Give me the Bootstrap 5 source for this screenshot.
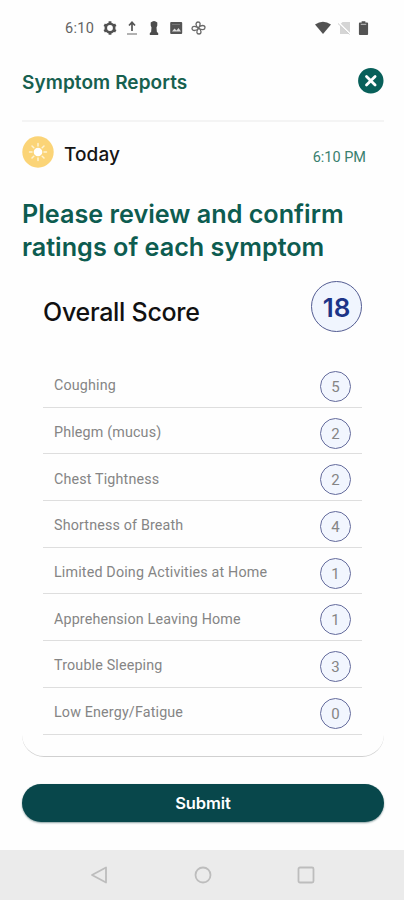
<!DOCTYPE html>
<html lang="en">
<head>
<meta charset="utf-8">
<meta name="viewport" content="width=device-width, initial-scale=1">
<title>Symptom Reports</title>
<link href="https://cdn.jsdelivr.net/npm/bootstrap@5.3.0/dist/css/bootstrap.min.css" rel="stylesheet">
<style>
body { font-family: Inter, "Liberation Sans", sans-serif; background: #fefefe; color: #151515; }
.screen { height: 900px; overflow: hidden; }
.status-bar { height: 55px; padding: 1px 35px 0 65px; font: 400 14.5px/54px Roboto, sans-serif; color: #636363; letter-spacing: .3px; }
.status-bar svg, .sys-nav svg { display: block; flex: none; }
.status-time { width: 38px; padding-top: 1px; }
.status-right { gap: 7px; }
.topbar { height: 67px; margin: 0 20px 0 22px; padding-bottom: 14px; border-bottom: 2px solid #f4f4f4; }
.page-title { font-size: 19px; font-weight: 600; line-height: 24px; color: #17604f; padding-top: 4px; letter-spacing: .08px; }
.close-btn { width: 26px; height: 26px; background: none; }
.day-row { height: 63px; margin: 0 38px 0 22px; padding-bottom: 3px; }
.day-name { font-size: 19px; font-weight: 500; line-height: 24px; margin-left: 10px; padding-top: 6px; letter-spacing: .1px; }
.day-time { font: 400 14.5px/20px Roboto, sans-serif; color: #39806e; padding-top: 11px; }
.prompt { height: 78px; padding: 13px 22px 0; font-size: 25.2px; font-weight: 600; line-height: 32.5px; color: #0d5c50; }
.overall { height: 98px; margin: 0 42px 0 43px; padding-top: 18px; }
.overall-name { font-size: 25px; font-weight: 500; line-height: 32px; color: #111; padding-top: 15px; letter-spacing: -.28px; }
.overall-score { width: 51px; height: 51px; border: 1.3px solid #535c92; background: #f0f5fe; color: #1c3488; font-size: 26px; font-weight: 600; padding-top: 2px; }
.symptoms { margin: 0 42px 0 43px; }
.symptom { height: 46.7px; padding: 0 11px; border-bottom: 1.3px solid #dedede; font: 400 14.3px/20px Roboto, sans-serif; color: #858585; letter-spacing: .16px; }
.symptom-name { padding-top: 3px; }
.rating { width: 31px; height: 31px; border: 1.3px solid #646b9c; background: #f2f6fe; margin-top: 5px; font-size: 15px; letter-spacing: 0; padding-top: 1px; }
.card-edge { height: 22px; margin: 0 20px 0 22px; border-bottom: 1.5px solid #d0d0d0; border-radius: 0 0 22px 22px; }
.submit-btn { height: 38px; margin: 27px 20px 0 22px; background: #08474b; color: #fff; font-size: 16.5px; line-height: 38px; font-weight: 600; letter-spacing: -.1px; box-shadow: 0 1px 2px #8aa0a2; }
.sys-nav { height: 50px; background: #ebebeb; padding: 0 89px 0 90px; }
</style>
</head>
<body>
<main class="screen d-flex flex-column">
  <header class="status-bar d-flex align-items-center flex-shrink-0">
    <span class="status-time">6:10</span>
    <div class="d-flex align-items-center gap-2">
      <svg width="14" height="16" viewBox="0 0 14 16" fill="none" stroke="#515151"><circle cx="7" cy="8" r="4.200" stroke-width="2.600"/><path d="M7 1.300v2M7 12.700v2M1.200 4.700l1.800 1M11 10.300l1.800 1M1.200 11.300l1.800-1M11 5.700l1.800-1" stroke-width="2.800"/></svg>
      <svg width="14" height="16" viewBox="0 0 14 16" fill="none"><path d="M7 11V3M4 5.500L7 2.300l3 3.200" stroke="#555" stroke-width="1.700"/><path d="M2 14h10" stroke="#999" stroke-width="1.500"/></svg>
      <svg width="14" height="16" viewBox="0 0 14 16" fill="#4c4c4c"><path d="M3.700 2.500Q7-.5 10.300 2.500v3L9.500 7.500l.4 4.500 1.300 1v2H2.800v-2l1.300-1 .4-4.500-.8-2z"/></svg>
      <svg width="14" height="16" viewBox="0 0 14 16"><rect x="1.200" y="2" width="12" height="12" rx="1" fill="#555"/><path d="M3 11.500l2.500-3 2 2 2-2.500 2.500 3.500z" fill="#ddd"/><path d="M3 4.500h8" stroke="#777"/></svg>
      <svg width="15" height="16" viewBox="0 0 15 16" fill="none" stroke="#686868" stroke-width="1.300"><path d="M7.500 8C4 6 4.500 2 7 2s3 2.500.5 6c2-3.500 6.500-3 6.500-.5S11 10.500 7.500 8c3.500 2 3 6 .5 6s-3-2.500-.5-6C5.500 11.500 1 11 1 8.500S4 5.500 7.500 8z"/></svg>
    </div>
    <div class="status-right d-flex align-items-center ms-auto">
      <svg width="16" height="14" viewBox="0 0 16 14"><path d="M0 3.500Q8-2 16 3.500L8 13z" fill="#525252"/></svg>
      <svg width="13" height="14" viewBox="0 0 13 14"><path d="M4.500 1H12v12H2V3.500z" fill="#d5d5d5"/><path d="M.5 1.500l12 12" stroke="#fff" stroke-width="1.600"/><path d="M0 2.500l11.500 11" stroke="#ccc"/></svg>
      <svg width="11" height="14" viewBox="0 0 12 15"><path d="M4 0h4v1.500h2q1 0 1 1V14q0 1-1 1H2q-1 0-1-1V2.500q0-1 1-1h2z" fill="#535353"/><path d="M3 3.500h6" stroke="#bbb" stroke-width="1.200"/></svg>
    </div>
  </header>

  <div class="topbar d-flex align-items-center justify-content-between flex-shrink-0">
    <h1 class="page-title m-0">Symptom Reports</h1>
    <button class="close-btn border-0 p-0 d-flex" type="button" aria-label="Close">
      <svg width="26" height="26" viewBox="0 0 26 26"><circle cx="12.800" cy="12.800" r="12.700" fill="#08605a"/><path d="M8.500 8.500l8.600 8.600M17.100 8.500l-8.600 8.600" stroke="#fff" stroke-width="2.800" stroke-linecap="round"/></svg>
    </button>
  </div>

  <div class="day-row d-flex align-items-center flex-shrink-0">
    <svg width="32" height="32" viewBox="0 0 32 32"><circle cx="16" cy="16" r="15.700" fill="#fbd477"/><circle cx="16" cy="16" r="4.300" fill="#fff"/><path d="M16 7.500v2.500M16 22v2.500M7.500 16H10M22 16h2.500M10 10l1.800 1.800M20.200 20.200L22 22M10 22l1.800-1.800M20.200 11.800L22 10" stroke="#fff3d3" stroke-width="1.500" stroke-linecap="round"/></svg>
    <div class="day-name">Today</div>
    <time class="day-time ms-auto">6:10 PM</time>
  </div>

  <h2 class="prompt m-0 flex-shrink-0">Please review and confirm ratings of each symptom</h2>

  <section class="flex-shrink-0">
    <div class="overall d-flex justify-content-between align-items-start">
      <div class="overall-name">Overall Score</div>
      <div class="overall-score rounded-circle d-flex align-items-center justify-content-center">18</div>
    </div>
    <div class="symptoms">
      <div class="symptom d-flex align-items-center justify-content-between"><span class="symptom-name">Coughing</span><span class="rating rounded-circle d-flex align-items-center justify-content-center">5</span></div>
      <div class="symptom d-flex align-items-center justify-content-between"><span class="symptom-name">Phlegm (mucus)</span><span class="rating rounded-circle d-flex align-items-center justify-content-center">2</span></div>
      <div class="symptom d-flex align-items-center justify-content-between"><span class="symptom-name">Chest Tightness</span><span class="rating rounded-circle d-flex align-items-center justify-content-center">2</span></div>
      <div class="symptom d-flex align-items-center justify-content-between"><span class="symptom-name">Shortness of Breath</span><span class="rating rounded-circle d-flex align-items-center justify-content-center">4</span></div>
      <div class="symptom d-flex align-items-center justify-content-between"><span class="symptom-name">Limited Doing Activities at Home</span><span class="rating rounded-circle d-flex align-items-center justify-content-center">1</span></div>
      <div class="symptom d-flex align-items-center justify-content-between"><span class="symptom-name">Apprehension Leaving Home</span><span class="rating rounded-circle d-flex align-items-center justify-content-center">1</span></div>
      <div class="symptom d-flex align-items-center justify-content-between"><span class="symptom-name">Trouble Sleeping</span><span class="rating rounded-circle d-flex align-items-center justify-content-center">3</span></div>
      <div class="symptom d-flex align-items-center justify-content-between"><span class="symptom-name">Low Energy/Fatigue</span><span class="rating rounded-circle d-flex align-items-center justify-content-center">0</span></div>
    </div>
    <div class="card-edge"></div>
  </section>

  <button class="submit-btn btn rounded-pill border-0 p-0 flex-shrink-0" type="button">Submit</button>

  <nav class="sys-nav d-flex align-items-center justify-content-between mt-auto flex-shrink-0">
    <svg width="18" height="18" viewBox="0 0 18 18" fill="none" stroke="#bdbdbd" stroke-width="1.800" stroke-linejoin="round"><path d="M16 1.500v15L2 9z"/></svg>
    <svg width="18" height="18" viewBox="0 0 18 18" fill="none" stroke="#bdbdbd" stroke-width="1.800"><circle cx="9" cy="9" r="7.500"/></svg>
    <svg width="18" height="18" viewBox="0 0 18 18" fill="none" stroke="#bdbdbd" stroke-width="1.800"><rect x="1.500" y="1.500" width="15" height="15" rx="1.500"/></svg>
  </nav>
</main>
<script src="https://cdn.jsdelivr.net/npm/bootstrap@5.3.0/dist/js/bootstrap.bundle.min.js"></script>
</body>
</html>
